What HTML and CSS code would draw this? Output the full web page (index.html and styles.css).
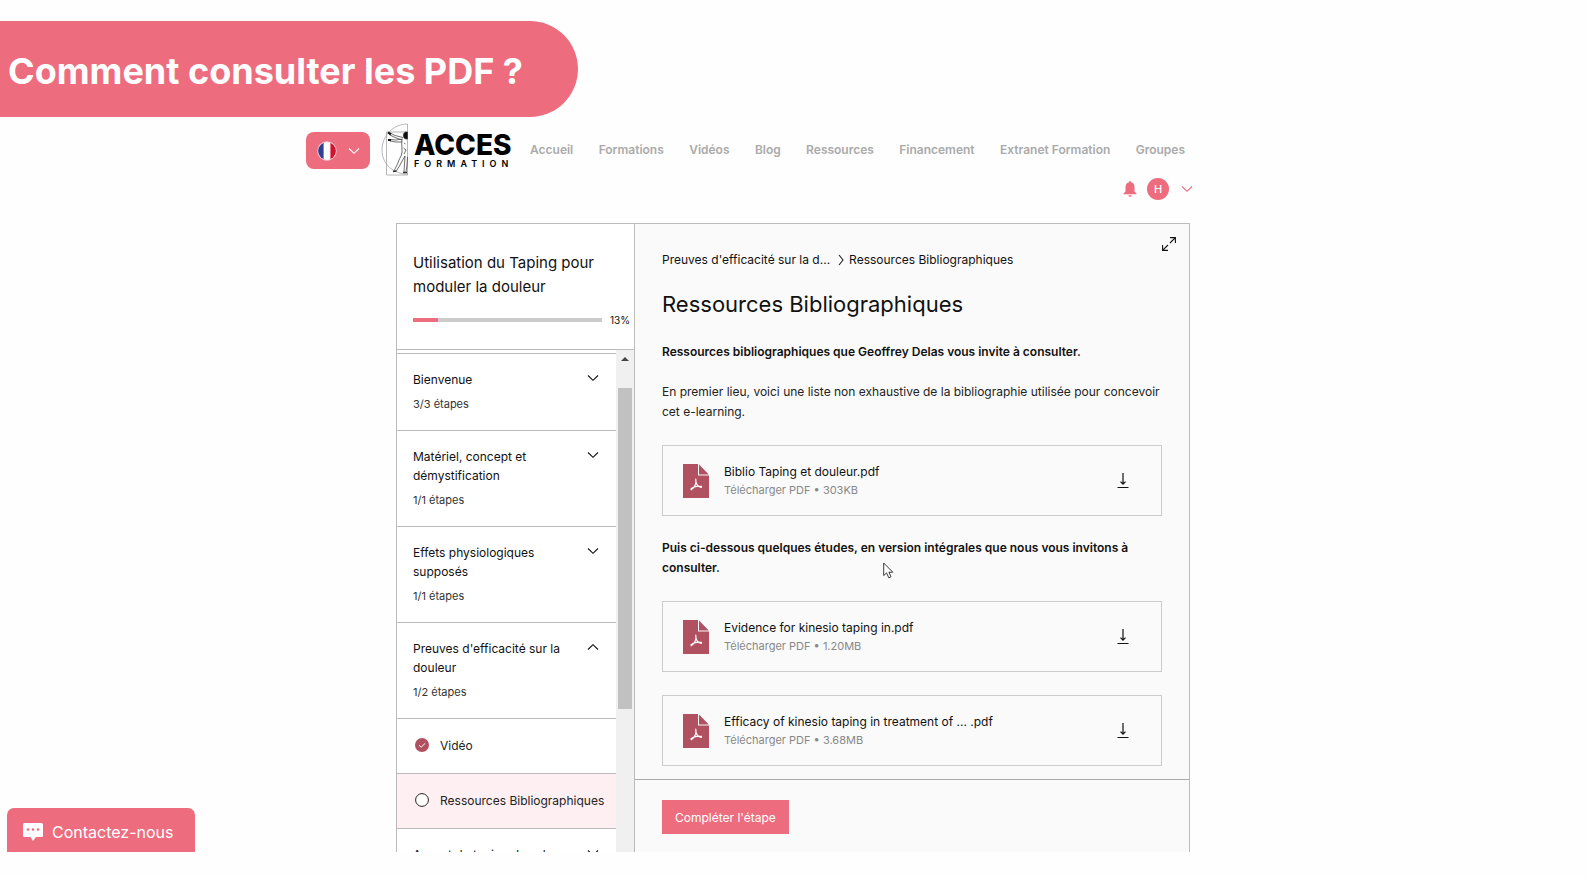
FILE: index.html
```html
<!DOCTYPE html>
<html lang="fr">
<head>
<meta charset="utf-8">
<title>Comment consulter les PDF ?</title>
<link rel="stylesheet" href="styles.css">
</head>
<body>
<svg class="sprite" aria-hidden="true">
  <symbol id="chevron" viewBox="0 0 12 8"><path d="M1 1.500L6 6.300L11 1.500" fill="none" stroke="currentColor" stroke-width="1.100"/></symbol>
  <symbol id="pdf" viewBox="0 0 26 34">
    <path d="M0 0H15V11.500H26V34H0Z" fill="#b05060"/>
    <path d="M16 .5L25.800 10.500H16Z" fill="#b05060"/>
    <path d="M12.800 15.200C13.600 18.800 12 23.500 8.200 25.800M12.800 17C13.200 20.200 15.500 23 18.500 23.500M8 24.800C10.500 22.600 14.500 21.600 18.500 22.400" fill="none" stroke="#fff" stroke-width="1.200" stroke-linecap="round"/>
  </symbol>
  <symbol id="download" viewBox="0 0 12 16"><path d="M6 0V11M3.500 8.700L6 11.200L8.500 8.700M.5 14.500H11.500" fill="none" stroke="currentColor" stroke-width="1.200"/></symbol>
</svg>

<h1 class="banner">Comment consulter les PDF ?</h1>

<header class="site-header">
  <button class="lang" type="button" aria-label="Langue : français">
    <svg class="flag" viewBox="0 0 20 20"><defs><clipPath id="disc"><circle cx="10" cy="10" r="9"/></clipPath></defs><circle cx="10" cy="10" r="9.500" fill="#fff"/><g clip-path="url(#disc)"><path d="M0 0H6.600V20H0Z" fill="#2f3f94"/><path d="M13.400 0H20V20H13.400Z" fill="#d3122f"/></g><circle cx="10" cy="10" r="9.400" fill="none" stroke="#e9aab8" stroke-width=".8"/></svg>
    <svg class="chevron" aria-hidden="true"><use href="#chevron"/></svg>
  </button>
  <a class="logo" href="#" aria-label="Acces Formation">
    <svg class="logo-mark" viewBox="0 0 28 53" fill="none" stroke="#333" stroke-width=".7">
      <path d="M26.500 1V52M26.500 1C12 1 1 13 1 27S12 51 26.500 51M5.500 9H26.500M5.500 9V52H26.500" stroke="#999"/>
      <path d="M9 10L14 12.500L22 14.500M8 11.500L14 14.500L21 17M9 16.500L15 17L22 16M9 18L15 19L21 19"/>
      <path d="M21 17C20 23 22 27 20.500 32L18 37L16.500 41L13 48M24 33L20.500 39L18.500 43L15 48.500M24 33L23.500 41L23 49M26.500 34L26 42L25 49M23 20L24.500 21M22.500 25L25 27L23 31"/>
      <path d="M26.500 9C23 8.500 22 11 22.500 13.500S24.500 16 26.500 16Z" fill="#111"/>
      <path d="M7 9.300L10 11.300M7 17H10" stroke="#111" stroke-width="2"/>
      <path d="M12 48.500L15.500 48M22 49.500H26" stroke-width="1.500"/>
    </svg>
    <span class="logo-text"><strong>ACCES</strong><span>FORMATION</span></span>
  </a>
  <div class="header-right">
    <nav class="nav">
      <a href="#">Accueil</a><a href="#">Formations</a><a href="#">Vidéos</a><a href="#">Blog</a><a href="#">Ressources</a><a href="#">Financement</a><a href="#">Extranet Formation</a><a href="#">Groupes</a>
    </nav>
    <div class="account">
      <button type="button" aria-label="Notifications"><svg class="bell" viewBox="0 0 14 16"><path d="M7 0C7.800 0 8 .6 8 1.300C10.600 1.900 11.500 4 11.500 6.200V10.500L13.500 12.500V13.300H.5V12.500L2.500 10.500V6.200C2.500 4 3.400 1.900 6 1.300C6 .6 6.200 0 7 0ZM5.500 14.200H8.500C8.500 16.300 5.500 16.300 5.500 14.200Z" fill="currentColor"/></svg></button>
      <button class="user" type="button" aria-label="Compte"><span class="avatar">H</span><svg class="chevron" aria-hidden="true"><use href="#chevron"/></svg></button>
    </div>
  </div>
</header>

<div class="course">
  <aside class="sidebar">
    <div class="summary">
      <h2>Utilisation du Taping pour moduler la douleur</h2>
      <div class="progress"><progress id="done" max="100" value="13"></progress><label for="done">13%</label></div>
    </div>
    <div class="steps">
      <div class="chapters">
        <button class="chapter" type="button"><span class="name">Bienvenue</span><svg class="chevron" aria-hidden="true"><use href="#chevron"/></svg><small>3/3 étapes</small></button>
        <button class="chapter" type="button"><span class="name">Matériel, concept et démystification</span><svg class="chevron" aria-hidden="true"><use href="#chevron"/></svg><small>1/1 étapes</small></button>
        <button class="chapter" type="button"><span class="name">Effets physiologiques supposés</span><svg class="chevron" aria-hidden="true"><use href="#chevron"/></svg><small>1/1 étapes</small></button>
        <button class="chapter open" type="button"><span class="name">Preuves d'efficacité sur la douleur</span><svg class="chevron" aria-hidden="true"><use href="#chevron"/></svg><small>1/2 étapes</small></button>
        <a class="step" href="#"><svg viewBox="0 0 14 14"><circle cx="7" cy="7" r="7" fill="#b05060"/><path d="M4 7.200L6.200 9.200L10.200 5.300" fill="none" stroke="#fff"/></svg>Vidéo</a>
        <a class="step current" href="#"><svg viewBox="0 0 14 14"><circle cx="7" cy="7" r="6.400" fill="#fff" stroke="#222"/></svg>Ressources Bibliographiques</a>
        <button class="chapter" type="button"><span class="name">Apport du taping dans le</span><svg class="chevron" aria-hidden="true"><use href="#chevron"/></svg></button>
      </div>
      <div class="track"><span class="arrow"></span><span class="thumb"></span></div>
    </div>
  </aside>

  <main class="lesson">
    <div class="content">
      <button class="expand" type="button" aria-label="Plein écran"><svg viewBox="0 0 14 14"><path d="M8 .6H13.400V6M13.400 .6L8 6M.6 8V13.400H6M.6 13.400L6 8" fill="none" stroke="#111" stroke-width="1.100"/></svg></button>
      <nav class="crumbs"><a href="#">Preuves d'efficacité sur la d...</a><svg viewBox="0 0 6 12"><path d="M1 1L5 6L1 11" fill="none" stroke="#222" stroke-width="1.100"/></svg><span>Ressources Bibliographiques</span></nav>
      <h2>Ressources Bibliographiques</h2>
      <p><strong>Ressources bibliographiques que Geoffrey Delas vous invite à consulter.</strong></p>
      <p>En premier lieu, voici une liste non exhaustive de la bibliographie utilisée pour concevoir cet e-learning.</p>
      <a class="file" href="#"><svg class="pdf"><use href="#pdf"/></svg><span class="file-text"><span>Biblio Taping et douleur.pdf</span><small>Télécharger PDF • 303KB</small></span><svg class="download"><use href="#download"/></svg></a>
      <p><strong>Puis ci-dessous quelques études, en version intégrales que nous vous invitons à consulter.</strong></p>
      <a class="file" href="#"><svg class="pdf"><use href="#pdf"/></svg><span class="file-text"><span>Evidence for kinesio taping in.pdf</span><small>Télécharger PDF • 1.20MB</small></span><svg class="download"><use href="#download"/></svg></a>
      <a class="file" href="#"><svg class="pdf"><use href="#pdf"/></svg><span class="file-text"><span>Efficacy of kinesio taping in treatment of ... .pdf</span><small>Télécharger PDF • 3.68MB</small></span><svg class="download"><use href="#download"/></svg></a>
      <svg class="cursor" viewBox="0 0 11 17" aria-hidden="true"><path d="M.7 1V13.500L3.600 10.900L5.800 15.800L8 14.800L5.900 10.200H9.800Z" fill="#fff" stroke="#222" stroke-width=".9"/></svg>
    </div>
    <footer class="lesson-footer"><button class="complete" type="button">Compléter l'étape</button></footer>
  </main>
</div>

<button class="contact" type="button"><svg viewBox="0 0 20 18"><path d="M1.500 0H18.500Q20 0 20 1.500V12.500Q20 14 18.500 14H13L10 18L7.500 14H1.500Q0 14 0 12.500V1.500Q0 0 1.500 0Z" fill="#fff"/><g fill="#ed6d7f"><circle cx="5" cy="6.500" r="1.300"/><circle cx="10" cy="6.500" r="1.300"/><circle cx="15" cy="6.500" r="1.300"/></g></svg>Contactez-nous</button>
</body>
</html>
```
FILE: styles.css
```css
* { box-sizing: border-box; }
body {
  margin: 0;
  height: 100vh;
  padding: 21px 0 25px;
  display: flex;
  flex-direction: column;
  overflow: hidden;
  position: relative;
  background: #fefefe;
  color: #111;
  font-family: Inter, "Liberation Sans", sans-serif;
  font-size: 12px;
}
button { font: inherit; color: inherit; background: none; border: 0; padding: 0; cursor: pointer; }
a { color: inherit; text-decoration: none; }
svg { display: block; flex: none; }
h1, h2, p { margin: 0; }
.sprite { position: absolute; width: 0; height: 0; }
.chevron { width: 12px; height: 8px; }

.banner {
  flex: none;
  align-self: flex-start;
  padding: 4px 55px 0 8px;
  border-radius: 0 48px 48px 0;
  background: #ed6d7f;
  color: #fff;
  font-size: 36px;
  line-height: 92px;
  font-weight: 700;
}

.site-header { flex: none; display: flex; align-items: flex-start; margin-left: 306px; padding-top: 6px; height: 106px; }
.lang { display: flex; align-items: center; gap: 11px; height: 37px; width: 64px; padding: 0 11px; margin-top: 9px; border-radius: 8px; background: #ed6d7f; color: #fff; }
.flag { width: 20px; height: 20px; }
.logo { display: flex; gap: 5px; margin-left: 11px; color: #000; }
.logo-mark { width: 28px; height: 53px; }
.logo-text { display: flex; flex-direction: column; padding-top: 9px; width: 100px; }
.logo-text strong { font-size: 28px; line-height: 27px; font-weight: 800; }
.logo-text span { font-size: 9px; line-height: 10px; font-weight: 600; letter-spacing: 5px; }
.header-right { width: 664px; margin-left: 16px; }
.nav { display: flex; justify-content: space-between; width: 655px; padding-top: 18px; color: #aaa; font-size: 12px; line-height: 18px; font-weight: 600; }
.account { display: flex; justify-content: flex-end; align-items: center; gap: 10px; margin: 19px 1px 0 0; color: #ed6d7f; }
.bell { width: 14px; height: 16px; }
.user { display: flex; align-items: center; gap: 12px; }
.avatar { width: 22px; height: 22px; border-radius: 50%; background: #ed6d7f; color: #fff; font-size: 11px; line-height: 22px; font-weight: 500; }

.course { flex: 1; min-height: 0; display: flex; width: 50%; margin: 0 auto 0 calc(25% - 1px); border: 1px solid #bbb; border-bottom: 0; }
.sidebar { width: 238px; flex: none; display: flex; flex-direction: column; border-right: 1px solid #bbb; background: #fff; }
.summary { flex: none; padding: 27px 4px 20px 16px; border-bottom: 1px solid #bbb; }
.summary h2 { font-size: 15px; line-height: 24px; font-weight: 400; padding-right: 20px; }
.progress { display: flex; align-items: center; justify-content: space-between; margin-top: 12px; font-size: 10px; line-height: 18px; }
progress { appearance: none; width: 189px; height: 4px; border: 0; background: #ccc; }
progress::-webkit-progress-bar { background: #ccc; }
progress::-webkit-progress-value { background: #ed6d7f; }
.steps { flex: 1; min-height: 0; display: flex; overflow: hidden; }
.chapters { flex: 1; min-width: 0; padding-top: 3px; }
.chapter { display: grid; grid-template-columns: 1fr 12px; row-gap: 5px; width: 100%; padding: 16px 17px 16px 16px; border-top: 1px solid #bbb; text-align: left; }
.chapter .name { line-height: 19px; padding-right: 12px; }
.chapter small { font-size: 11px; line-height: 20px; color: #333; }
.chapter .chevron { margin-top: 4px; }
.chapter.open .chevron { transform: rotate(180deg); }
.step { display: flex; align-items: center; gap: 11px; height: 55px; padding: 0 0 2px 18px; border-top: 1px solid #bbb; color: #222; white-space: nowrap; }
.step svg { width: 14px; height: 14px; }
.step.current { background: #feeff2; }
.track { flex: none; width: 18px; background: #f0f0f0; display: flex; flex-direction: column; align-items: center; }
.arrow { margin: 7px 0 27px; border: 4px solid transparent; border-top: 0; border-bottom: 4px solid #444; }
.thumb { width: 14px; height: 321px; background: #c1c1c1; }

.lesson { flex: 1; min-width: 0; display: flex; flex-direction: column; background: #fafafa; }
.content { flex: 1; min-height: 0; position: relative; padding: 26px 27px 0; overflow: hidden; }
.expand { position: absolute; top: 13px; right: 13px; }
.expand svg { width: 14px; height: 14px; }
.crumbs { display: flex; align-items: center; gap: 5px; line-height: 20px; }
.crumbs a { margin-right: 3px; }
.crumbs svg { width: 6px; height: 12px; }
.content h2 { margin: 19px 0 23px; font-size: 22px; line-height: 30px; font-weight: 400; }
.content p { margin-bottom: 20px; line-height: 20px; color: #222; }
.content p strong { font-weight: 600; color: #111; }
.content .file { display: flex; align-items: center; height: 71px; margin: 23px 0 22px; padding: 0 32px 0 20px; border: 1px solid #ccc; }
.pdf { width: 26px; height: 34px; }
.file-text { flex: 1; margin-left: 15px; display: flex; flex-direction: column; line-height: 19px; }
.file-text small { font-size: 11px; color: #888; }
.download { width: 12px; height: 16px; }
.cursor { position: absolute; left: 248px; top: 338px; width: 11px; height: 17px; }
.lesson-footer { flex: none; height: 73px; padding: 20px 27px; border-top: 1px solid #aaa; }
.complete { height: 34px; padding: 0 13px; background: #ed6d7f; color: #fff; }

.contact { position: absolute; left: 7px; bottom: 25px; display: flex; align-items: center; gap: 9px; width: 188px; height: 44px; padding: 4px 16px 0; border-radius: 7px 7px 0 0; background: #ed6d7f; color: #fff; font-size: 16px; }
.contact svg { width: 20px; height: 18px; }
```
